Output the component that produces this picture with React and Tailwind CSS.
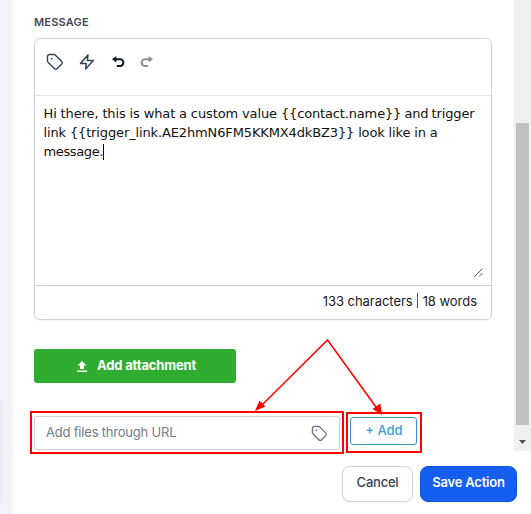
const TagIcon = ({ className }) => (
  <svg className={className} viewBox="0 0 18 18" fill="none" stroke="currentColor" strokeWidth="1.4" strokeLinejoin="round" strokeLinecap="round">
    <path d="M1.5 3.6v4.3c0 .5.2.9.5 1.3l6.6 6.6c.7.7 1.7.7 2.4 0l4.8-4.8c.7-.7.7-1.7 0-2.4L9.2 2c-.4-.3-.8-.5-1.3-.5H3.6c-1.2 0-2.1.9-2.1 2.1z" />
    <circle cx="5.6" cy="5.6" r=".9" fill="currentColor" stroke="none" />
  </svg>
)

const BoltIcon = () => (
  <svg className="size-4" viewBox="0 0 16 16" fill="none" stroke="currentColor" strokeWidth="1.5" strokeLinejoin="round">
    <path d="M8.9 1 1.5 9.6h5.7L6.6 15 14.3 6.4H8.4z" />
  </svg>
)

const UndoIcon = ({ className }) => (
  <svg className={className} viewBox="0 0 14 14" fill="none" stroke="currentColor" strokeWidth="2">
    <path d="M3 4.3h6.1a3.2 3.2 0 0 1 0 6.6H5.8" />
    <path d="M5.3 1v6.6L1 4.3z" fill="currentColor" stroke="none" />
  </svg>
)

const UploadIcon = () => (
  <svg className="h-[11px] w-[10px]" viewBox="0 0 10 11" fill="currentColor">
    <path d="M5 0 .5 4.5H3V8h4V4.5h2.5zM0 9.5h10V11H0z" />
  </svg>
)

function Editor() {
  return (
    <div className="flex h-[282px] w-[458px] flex-col rounded-md border border-[#d0d3dd] shadow-xs">
      <div className="flex h-[57px] shrink-0 items-start border-b border-[#e2e4e9] pt-[14px] pl-[11px] text-[#344054]">
        <TagIcon className="size-[18px]" />
        <div className="mt-px ml-[15px]"><BoltIcon /></div>
        <UndoIcon className="mt-[2px] ml-4 size-[14px] text-[#101828]" />
        <UndoIcon className="mt-[2px] ml-[15px] size-[14px] -scale-x-100 text-[#8f9094]" />
      </div>
      <div className="relative grow pt-[8px] pl-[8.5px] font-['DejaVu_Sans',sans-serif] text-[13px] leading-[19px] whitespace-nowrap text-[#111]">
        <p className="tracking-[-0.11px]">
          <span className="[word-spacing:-0.1px]">Hi there, this is what a custom value </span>
          <span className="tracking-[-0.15px] [word-spacing:-0.8px]">{'{{contact.name}}'} and trigger</span>
        </p>
        <p className="tracking-[-0.13px] [word-spacing:-0.1px]">link {'{{trigger_link.AE2hmN6FM5KKMX4dkBZ3}}'} look like in a</p>
        <p className="flex items-center tracking-[-0.38px]">message.<span className="h-4 w-px bg-black" /></p>
        <svg className="absolute right-[8px] bottom-[8px] size-[9px]" viewBox="0 0 9 9" stroke="#555" strokeWidth=".9">
          <path d="M.5 8.5l8-8M5 8.5 8.5 5" />
        </svg>
      </div>
      <div className="flex h-[34px] shrink-0 items-start justify-end border-t border-[#d0d3dd] pt-[5px] pr-[14px] text-[13px] leading-5 tracking-[-0.04px] text-[#18191c]">
        133 characters<span className="mr-[5px] ml-[4px] mt-[2px] h-[15px] w-px bg-[#555]" />18 words
      </div>
    </div>
  )
}

// Red callout lines pointing at the URL field and its add button
function Arrows() {
  return (
    <svg className="pointer-events-none absolute top-0 left-0 h-[514px] w-[531px]" viewBox="0 0 531 514" fill="#f00">
      <path d="M262 405 327.5 340 376 407" fill="none" stroke="#f00" strokeWidth="1.5" />
      <path d="M255 411 259.5 400.5 265.5 406.5zM382 415 372.5 409 380.3 403.5z" />
    </svg>
  )
}

export default function App() {
  return (
    <div className="relative flex h-[514px] w-[531px] overflow-hidden bg-white font-[Inter,sans-serif]">
      <aside className="flex w-[13px] shrink-0 items-start bg-[#f2f3f8] pt-[400px]">
        <div className="h-[102px] w-px bg-[#e9eaef] shadow-[0_0_4px_#d5d6dd]" />
      </aside>
      <div className="flex grow flex-col">
        <div className="flex h-[451px]">
          <main className="w-[501px] pl-[21px]">
            <h2 className="h-[38px] pt-[14px] text-[11px] leading-4 font-semibold tracking-[0.2px] text-[#3f4859]">MESSAGE</h2>
            <Editor />
            <button className="mt-[29px] flex h-[34px] w-[202px] items-center justify-center gap-[10px] rounded-[3px] bg-[#30ad30] pl-[3px] text-[13px] font-bold tracking-[-0.15px] text-white">
              <UploadIcon />
              Add attachment
            </button>
            <div className="mt-[28px] -ml-1 flex items-start gap-[2px]">
              <div className="h-[43px] w-[314px] border-2 border-[#f00] px-[2px] pt-[3px]">
                <div className="flex h-[34px] w-[306px] items-center justify-between rounded-[3px] border border-[#d0d3dd] pr-[11px] pl-[11px] text-[13px] tracking-[-0.2px] text-[#747b8b] shadow-xs">
                  Add files through URL
                  <TagIcon className="size-[17px] text-[#667085]" />
                </div>
              </div>
              <div className="mt-px h-[41px] w-[76px] border-2 border-[#f00] px-[2px] pt-[3px]">
                <button className="h-7 w-[67px] rounded-[3px] border border-[#3992c8] pb-px pl-px text-[13px] font-medium text-[#3a9fdb]">+ Add</button>
              </div>
            </div>
          </main>
          <div className="flex w-[17px] flex-col items-center bg-[#f0f0f0] pt-[123px]">
            <div className="h-[302px] w-[13px] bg-[#c1c1c1]" />
            <svg className="mt-[15px] h-[4px] w-[7px]" viewBox="0 0 7 4" fill="#505050"><path d="M0 0h7L3.5 4z" /></svg>
          </div>
        </div>
        <footer className="flex gap-[7px] pt-[15px] pl-[329px] text-[13px] font-medium tracking-[-0.22px]">
          <button className="h-9 w-[71px] rounded-lg border border-[#d0d3dd] pb-[3px] text-[#344054] shadow-xs">Cancel</button>
          <button className="h-9 w-[97px] rounded-lg border border-[#0f55e8] bg-[#155eef] pb-[3px] font-semibold text-white shadow-xs">Save Action</button>
        </footer>
      </div>
      <Arrows />
    </div>
  )
}
